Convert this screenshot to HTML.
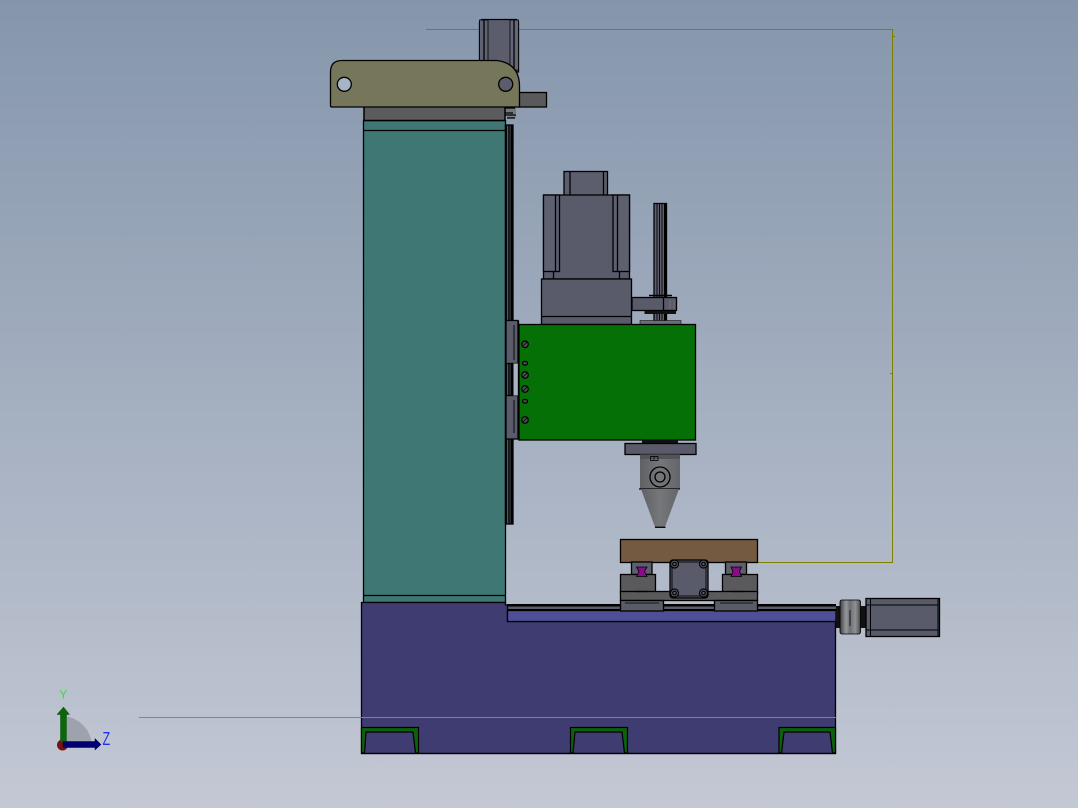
<!DOCTYPE html>
<html><head><meta charset="utf-8"><style>
html,body{margin:0;padding:0;background:#c2c7d3}
svg{display:block;position:absolute;left:0;top:0}
text{font-family:"Liberation Sans",sans-serif}
</style></head><body>
<svg width="1078" height="808" viewBox="0 0 1078 808" xmlns="http://www.w3.org/2000/svg">
<defs>
<linearGradient id="bg" x1="0" y1="0" x2="0" y2="1"><stop offset="0" stop-color="#8596ac"/><stop offset="1" stop-color="#c3c8d4"/></linearGradient>
<linearGradient id="cone" x1="0" y1="0" x2="1" y2="0"><stop offset="0" stop-color="#5f6064"/><stop offset=".5" stop-color="#76777a"/><stop offset="1" stop-color="#646568"/></linearGradient>
<linearGradient id="coup" x1="0" y1="0" x2="1" y2="0"><stop offset="0" stop-color="#3c3d42"/><stop offset=".14" stop-color="#6a6b6f"/><stop offset=".3" stop-color="#97989b"/><stop offset=".48" stop-color="#6d6e72"/><stop offset=".75" stop-color="#8f9093"/><stop offset=".9" stop-color="#66676b"/><stop offset="1" stop-color="#3c3d42"/></linearGradient>
</defs>
<rect width="1078" height="808" fill="url(#bg)"/>

<!-- guide lines -->
<path d="M426 29.500H892.500V562.500H757" fill="none" stroke="#808000" stroke-width="1"/>
<path d="M892 36.500h3M890 373.500h3" stroke="#808000" stroke-width="1"/>

<g stroke="#000" stroke-width="1.300">
<!-- top motor -->
<path d="M479.500 62V22l2-2.500h35l2 2.500V72h-39z" fill="#5b5d6c"/>
<rect x="479.500" y="20" width="8.500" height="42" fill="#5f6272" stroke-width=".8"/>
<rect x="510" y="20" width="8.500" height="50" fill="#646778" stroke-width=".8"/>
<path d="M484 20V62M514 20V68" fill="none"/>
<!-- right bar -->
<rect x="519" y="92.500" width="27.500" height="14.500" fill="#5a5a5c"/>
<!-- connector -->
<rect x="505" y="107" width="11" height="6" fill="#77787a" stroke="none"/>
<rect x="507" y="113" width="9" height="5" fill="#7e7f82" stroke="none"/>
<path d="M505 108h10M505 113h8M505 115h11M507 118h8" fill="none"/>
<!-- teal column -->
<rect x="363.500" y="120.500" width="142" height="482" fill="#3f7775"/>
<path d="M364 130.500H505M364 595.500H505" fill="none"/>
<!-- top block -->
<rect x="364" y="106.500" width="141" height="14" fill="#5c5c5e" stroke-width="1.500"/>
<!-- bracket -->
<path d="M330.500 72q0-11.500 11.500-11.500H497q22 3 22.500 25V107H331.500q-1 0-1-1.500z" fill="#75765a"/>
<circle cx="344.300" cy="84.300" r="7" fill="#a6b4c6"/>
<circle cx="505.700" cy="84.300" r="7" fill="#5b5d6c"/>
<!-- vertical strip -->
<rect x="505.500" y="125" width="7.500" height="399" fill="#55575f"/>
<path d="M506.200 125V524M509 125V524" fill="none" stroke-width="1.400"/>
<rect x="510.500" y="125" width="2.500" height="399" fill="#000" stroke="none"/>
<!-- spindle motor -->
<rect x="564" y="171.500" width="43.500" height="24" fill="#5c5e6d"/>
<path d="M570 171.500V195M603.500 171.500V195" fill="none"/>
<rect x="543.500" y="195" width="86" height="84" fill="#595b6a"/>
<rect x="543.500" y="195" width="16" height="76.500" fill="#5e6070"/>
<rect x="613" y="195" width="16.500" height="76.500" fill="#5e6070"/>
<path d="M555.500 195V271.500M617.500 195V271.500" fill="none"/>
<path d="M553.500 271.500V279M619.500 271.500V279" fill="none"/>
<rect x="541.500" y="279" width="90" height="45.500" fill="#595b6a"/>
<path d="M541.500 316.500H631.500" fill="none"/>
<!-- shaft -->
<rect x="654" y="203.500" width="12.500" height="118" fill="#5e6070"/>
<path d="M657 203.500V321M659.500 203.500V321M662 203.500V321" fill="none" stroke-width=".9"/>
<rect x="664" y="203.500" width="3" height="118" fill="#000" stroke="none"/>
<rect x="640" y="320.500" width="41" height="4" fill="#6c6d78" stroke-width=".5"/>
<path d="M649 295.500H672" fill="none" stroke-width="1.500"/>
<rect x="632" y="297.500" width="44.500" height="13" fill="#595b6a"/>
<path d="M663.500 297.500V310.500" fill="none"/>
<rect x="644.500" y="311" width="31.500" height="3" fill="#111" stroke="none"/>
<path d="M670 300V309M674 300V309" stroke="#777" fill="none" stroke-width=".8"/>
<!-- green block -->
<rect x="519" y="324.500" width="176.500" height="115.500" fill="#057006" stroke-width="1.300"/>
<!-- plates -->
<rect x="506" y="320.500" width="12" height="43" fill="#5a5c6b"/>
<rect x="506" y="395.500" width="12" height="43.500" fill="#5a5c6b"/>
<path d="M514 325V360M514 400V433" fill="none" stroke-width=".9"/>
<rect x="513.500" y="363.500" width="4.500" height="32" fill="#a9b4c3" stroke="none"/>
<path d="M518.500 320.500V439" fill="none"/>
<!-- screws -->
<g fill="#4a4f4a" stroke-width="1.200">
<circle cx="525" cy="344.300" r="3.300"/><circle cx="525" cy="375" r="3.300"/><circle cx="525" cy="389" r="3.300"/><circle cx="525" cy="420" r="3.300"/>
<rect x="522.500" y="361.500" width="5" height="3.500" rx="1.700"/><rect x="522.500" y="399.500" width="5" height="3.500" rx="1.700"/>
</g>
<path d="M523 346l4-4M523 377l4-4M523 391l4-4M523 422l4-4" stroke="#000" stroke-width=".8" fill="none"/>
<!-- spindle head -->
<rect x="642" y="439.500" width="36" height="3.500" fill="#111" stroke="none"/>
<rect x="625" y="443.500" width="71" height="11" fill="#595b6a"/>
<rect x="640" y="454.500" width="40" height="34.500" fill="url(#cone)" stroke="none"/>
<rect x="640" y="455" width="40" height="4" fill="#53545a" stroke="none"/>
<rect x="650.500" y="456.500" width="7.500" height="4" fill="none" stroke-width=".8"/>
<path d="M654 456.500V460.500" fill="none" stroke-width=".7"/>
<path d="M639 489H680" fill="none"/>
<path d="M641 489H679L665 527H655z" fill="url(#cone)" stroke="none"/>
<path d="M655 527.300H665.500" fill="none" stroke-width="1.300"/>
<circle cx="660" cy="477" r="10" fill="none"/>
<circle cx="660" cy="477" r="5" fill="none"/>
<!-- rail -->
<rect x="507" y="604" width="329" height="2.500" fill="#000" stroke="none"/>
<rect x="507" y="606.500" width="329" height="2.500" fill="#5a5c66" stroke="none"/>
<rect x="507" y="609" width="329" height="1.800" fill="#000" stroke="none"/>
<!-- base -->
<path d="M361.500 602.500H505.500V605H507.500V621.500H835.500V753.500H361.500z" fill="#3f3c72"/>
<rect x="507.500" y="610.500" width="328.500" height="11" fill="#4f4f96"/>
<!-- feet -->
<g fill="#0c620c" stroke-width="1.200">
<path d="M361.500 753V727.500H418.500V753H415.500L413 732H366L364.500 753z"/>
<path d="M570.500 753V727.500H627.500V753H624.500L622 732H575L573 753z"/>
<path d="M779 753V727.500H835.500V753H832.500L830 732H784L781.500 753z"/>
</g>
<path d="M139 717.500H836" fill="none" stroke="#7f8290" stroke-width="1"/>
<path d="M361 753.500H836" fill="none" stroke-width="1.300"/>
<!-- table -->
<rect x="620.500" y="539.500" width="137" height="23" fill="#745a40" stroke-width="1.300"/>
<rect x="631.500" y="562" width="20.500" height="12.500" fill="#5d5f6d"/>
<rect x="725.500" y="562" width="21" height="12.500" fill="#5d5f6d"/>
<rect x="620.500" y="574.500" width="35" height="19" fill="#5a5a5c"/>
<rect x="722.500" y="574.500" width="35" height="19" fill="#5a5a5c"/>
<rect x="620.500" y="591.500" width="137" height="9" fill="#5a5a5c"/>
<path d="M635 591.500H647M731 591.500H744" fill="none"/>
<path d="M636.500 567H647L644.500 571.500L647 576.500H636.500L639 571.500z" fill="#8a0a8a" stroke-width=".8"/>
<path d="M731 567H741.500L739.500 571.500L741.500 576.500H731L733 571.500z" fill="#8a0a8a" stroke-width=".8"/>
<rect x="620.500" y="600.500" width="43" height="10.500" fill="#595b66"/>
<rect x="714.500" y="600.500" width="43" height="10.500" fill="#595b66"/>
<path d="M625 603H659M720 603H753" fill="none" stroke-width=".7"/>
<!-- center motor -->
<rect x="670" y="560" width="38" height="38" rx="3" fill="#595b6a"/>
<rect x="672" y="562" width="34" height="34" fill="none" stroke-width=".9"/>
<g fill="#5e6070" stroke-width="1.200">
<circle cx="674.500" cy="564" r="4"/><circle cx="703.500" cy="564" r="4"/><circle cx="674.500" cy="593" r="4"/><circle cx="703.500" cy="593" r="4"/>
<circle cx="674.500" cy="564" r="1.800"/><circle cx="703.500" cy="564" r="1.800"/><circle cx="674.500" cy="593" r="1.800"/><circle cx="703.500" cy="593" r="1.800"/>
</g>
<!-- x motor -->
<rect x="836" y="606" width="4" height="22" fill="#111" stroke="none"/>
<rect x="860" y="606" width="6" height="22" fill="#111" stroke="none"/>
<rect x="840" y="600" width="20.500" height="34" rx="2" fill="url(#coup)" stroke-width=".8"/>
<path d="M850 610V626" stroke-width=".8" fill="none"/>
<rect x="866" y="598.500" width="73.500" height="38" fill="#595b6a"/>
<path d="M870.500 599V636M866 605H938M866 630H938M938 599V636" fill="none" stroke-width="1"/>
</g>

<!-- triad -->
<path d="M67 716.500A31 31 0 0 1 92 744.500H67z" fill="#9ea2ac"/>
<circle cx="62.500" cy="745" r="5.500" fill="#7c1010"/>
<path d="M60.500 714.500H57L63.500 707L69.500 714.500H66.500V742H60.500z" fill="#0c660c" stroke="#0a4e0a" stroke-width=".5"/>
<path d="M63 741.500H95V738.500L101 744.500L95 750V747.500H63z" fill="#000070" stroke="#000060" stroke-width=".5"/>
<text x="59.500" y="698.500" font-size="11.500" fill="#33e033">Y</text>
<text transform="translate(102.500 745) scale(.68 1)" font-size="18.500" fill="#2030f0">Z</text>
</svg>
</body></html>
